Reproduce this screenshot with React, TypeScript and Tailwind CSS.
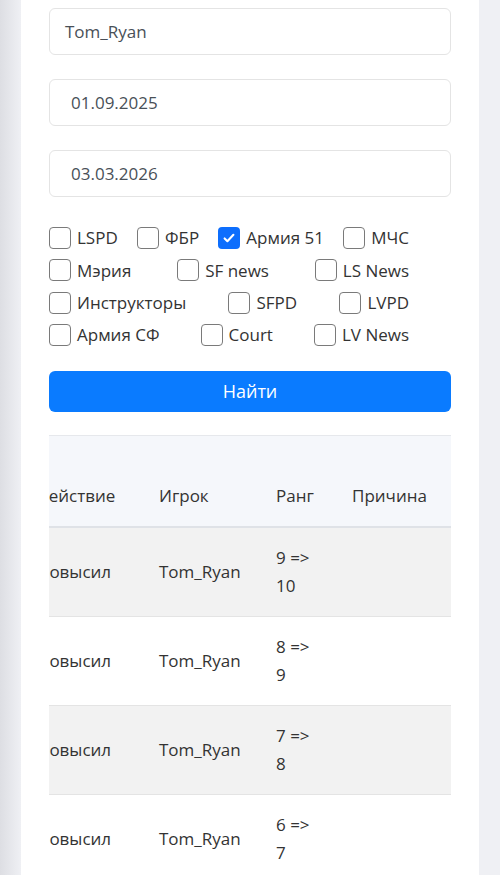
import React from 'react'

const groups = [
  [
    { label: 'LSPD' },
    { label: 'ФБР' },
    { label: 'Армия 51', checked: true },
    { label: 'МЧС' },
  ],
  [{ label: 'Мэрия' }, { label: 'SF news' }, { label: 'LS News' }],
  [{ label: 'Инструкторы' }, { label: 'SFPD' }, { label: 'LVPD' }],
  [{ label: 'Армия СФ' }, { label: 'Court' }, { label: 'LV News' }],
]

const rows = [
  { action: 'Повысил', player: 'Tom_Ryan', rank: '9 => 10' },
  { action: 'Повысил', player: 'Tom_Ryan', rank: '8 => 9' },
  { action: 'Повысил', player: 'Tom_Ryan', rank: '7 => 8' },
  { action: 'Повысил', player: 'Tom_Ryan', rank: '6 => 7' },
]

function Check({ label, checked }: { label: string; checked?: boolean }) {
  return (
    <label className="flex items-center gap-[6px]">
      {checked ? (
        <span className="flex h-[22px] w-[22px] items-center justify-center rounded-[4px] bg-[#0d6efd]">
          <svg className="h-[16px] w-[16px]" viewBox="0 0 20 20" fill="none">
            <path d="M4.5 10.5l3.5 3.5 7.5-8" stroke="#fff" strokeWidth="2.6" strokeLinecap="round" strokeLinejoin="round" />
          </svg>
        </span>
      ) : (
        <span className="h-[22px] w-[22px] rounded-[4px] border-[1.5px] border-[#7a7a7a] bg-white" />
      )}
      <span className="text-[17px] text-[#333]">{label}</span>
    </label>
  )
}

export default function App() {
  return (
    <div className="min-h-screen bg-[linear-gradient(to_right,#dddee3,#eff0f4_21px)] pl-[21px] pr-[21px] font-['Open_Sans',sans-serif]">
      <div className="min-h-[875px] bg-white px-[28px] pt-[8px]">
        {/* Filters */}
        <div className="flex flex-col gap-[24px]">
          <div className="flex h-[47px] items-center rounded-md border border-[#e4e4e4] px-[15px] text-[17px] text-[#495057]">
            Tom_Ryan
          </div>
          <div className="flex h-[47px] items-center rounded-md border border-[#e4e4e4] px-[21px] text-[17px] text-[#495057]">
            01.09.2025
          </div>
          <div className="flex h-[47px] items-center rounded-md border border-[#e4e4e4] px-[21px] text-[17px] text-[#495057]">
            03.03.2026
          </div>
        </div>

        <div className="mt-[25px] w-[360px]">
          {groups.map((g, i) => (
            <div key={i} className="flex h-[32.33px] items-center justify-between">
              {g.map((c) => (
                <Check key={c.label} label={c.label} checked={c.checked} />
              ))}
            </div>
          ))}
        </div>

        <button className="mt-[20px] h-[41px] w-full rounded-md bg-[#0a7bff] text-[18px] text-white">
          Найти
        </button>

        {/* Results, scrolled to the right edge */}
        <div className="mt-[23px] flex justify-end overflow-hidden border-t border-[#e6e8ec]">
          <table className="w-[430px] shrink-0 table-fixed border-collapse text-[17px] leading-[28px] text-[#333]">
            <colgroup>
              <col className="w-[122px]" />
              <col className="w-[117px]" />
              <col className="w-[76px]" />
              <col className="w-[115px]" />
            </colgroup>
            <thead>
              <tr className="h-[91px] border-b-2 border-[#dfe2e7] bg-[#f5f7fb]">
                <th className="whitespace-nowrap px-4 pb-4 text-left align-bottom font-normal">Действие</th>
                <th className="whitespace-nowrap px-4 pb-4 text-left align-bottom font-normal">Игрок</th>
                <th className="px-4 pb-4 text-left align-bottom font-normal">Ранг</th>
                <th className="whitespace-nowrap px-4 pb-4 text-left align-bottom font-normal">Причина</th>
              </tr>
            </thead>
            <tbody>
              {rows.map((r, i) => (
                <tr key={i} className={`border-b border-[#e4e4e4] ${i % 2 === 0 ? 'bg-[#f2f2f2]' : 'bg-white'}`}>
                  <td className="whitespace-nowrap px-4 py-4 align-middle">{r.action}</td>
                  <td className="whitespace-nowrap px-4 py-4 align-middle">{r.player}</td>
                  <td className="px-4 py-4 align-middle">{r.rank}</td>
                  <td className="px-4 py-4 align-middle"></td>
                </tr>
              ))}
            </tbody>
          </table>
        </div>
      </div>
    </div>
  )
}
